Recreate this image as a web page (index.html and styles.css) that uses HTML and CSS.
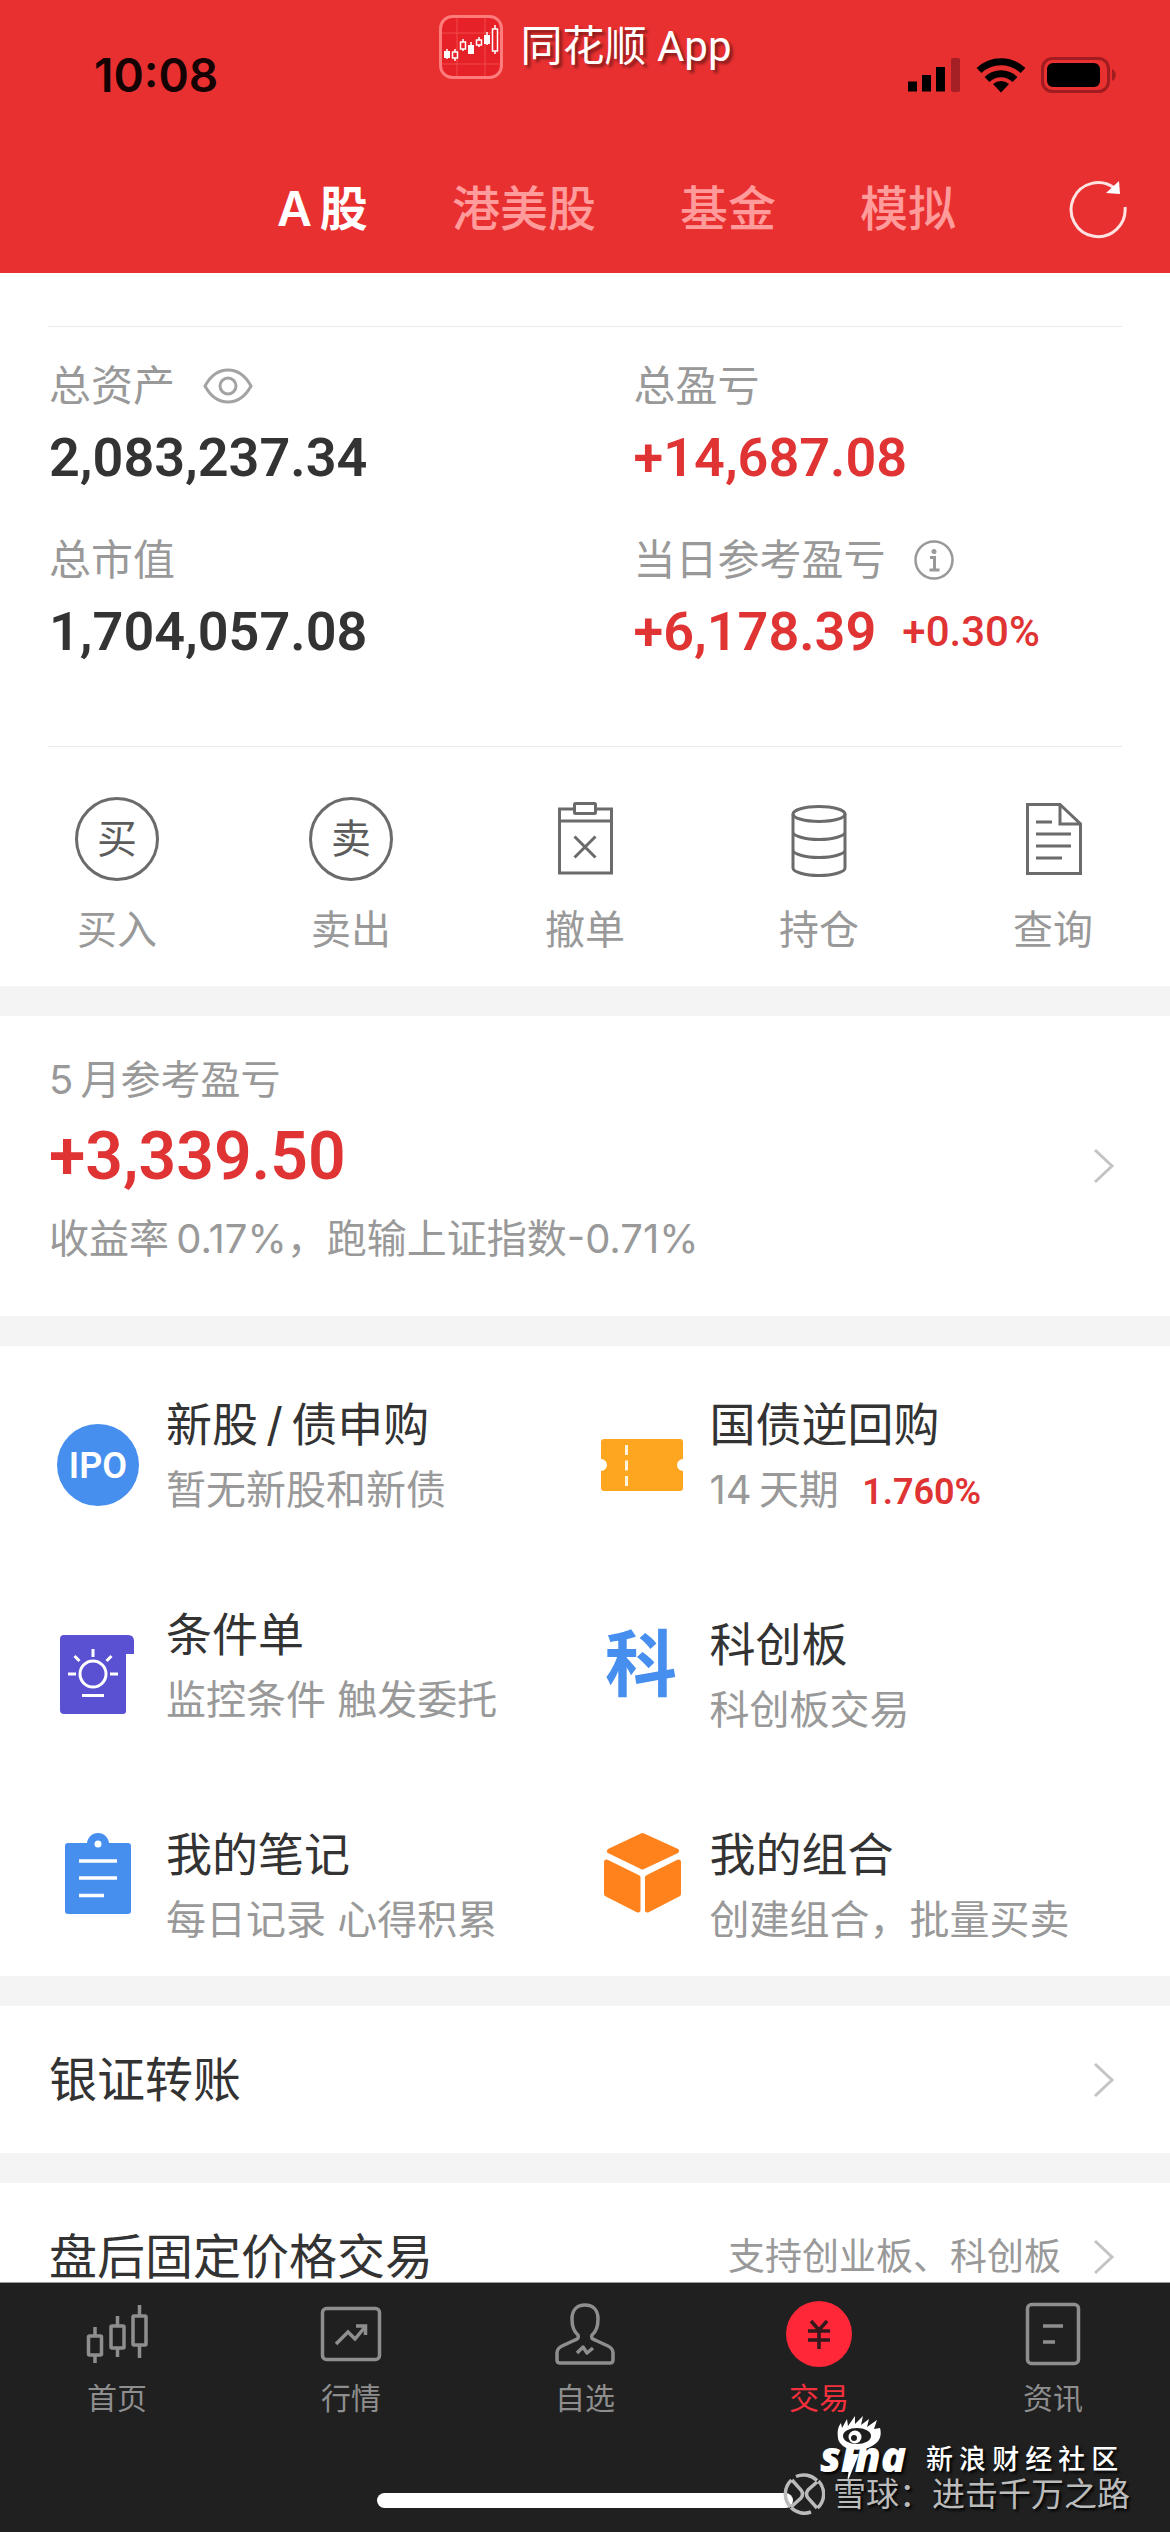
FILE: index.html
```html
<!DOCTYPE html>
<html lang="zh-CN">
<head>
<meta charset="utf-8">
<meta name="viewport" content="width=device-width, initial-scale=1">
<title>交易 - 同花顺</title>
<link rel="stylesheet" href="styles.css">
</head>
<body>
<div class="app">
  <header class="header">
    <div class="status">
      <time class="clock">10:08</time>
      <div class="brand">
        <svg class="brand-logo" viewBox="0 0 64 64" aria-hidden="true">
          <rect x="1.5" y="1.5" width="61" height="61" rx="12" fill="#e62127" stroke="#ff7c7c" stroke-width="3"/>
          <path d="M18 3v58M46 3v58M3 18h58M3 49h58" stroke="#f04a4a" stroke-width="1"/>
          <path d="M8 34v10M16 34v12M24 24v12M32 27v12M40 22v10M48 17v13M56 10v29" stroke="#fff" stroke-width="1.500"/>
          <path d="M5 36h6v7H5zM29 30h6v9h-6zM45 20h6v9h-6z" fill="#fff"/>
          <path d="M13.500 37h5v6h-5zM21.500 27h5v7h-5zM37.500 25h5v5h-5zM53.500 14h5v22h-5z" fill="#e62127" stroke="#fff" stroke-width="1.500"/>
        </svg>
        <span>同花顺 App</span>
      </div>
      <svg class="signals" viewBox="0 0 210 38" aria-hidden="true">
        <path d="M2 35.500V25.500M16 35.500V19M30 35.500V11" transform="translate(2.500 0)" stroke="#000" stroke-width="9" stroke-linecap="butt"/>
        <rect x="43" y="2" width="9" height="34" rx="2" fill="#a52024"/>
        <g fill="none" stroke="#000" stroke-width="7">
          <path d="M71 14.500a32 32 0 0 1 44 0"/>
          <path d="M79 23.500a20 20 0 0 1 28 0"/>
        </g>
        <path d="M93 36.500l-8-8.500a12 12 0 0 1 16 0z" fill="#000"/>
        <rect x="134.500" y="2.500" width="66" height="33" rx="10" fill="none" stroke="#a01c20" stroke-width="3"/>
        <rect x="139" y="7" width="53" height="24" rx="6" fill="#000"/>
        <path d="M204 13c5 2 5 10 0 12z" fill="#a01c20"/>
      </svg>
    </div>
    <nav class="tabs" aria-label="市场">
      <a class="tab tab-on" href="#a">A&thinsp;股</a>
      <a class="tab" href="#hk">港美股</a>
      <a class="tab" href="#fund">基金</a>
      <a class="tab" href="#sim">模拟</a>
      <button class="refresh" type="button" aria-label="刷新">
        <svg viewBox="0 0 60 62" aria-hidden="true">
          <path d="M57 29A27 27 0 1 1 47 10.500" fill="none" stroke="#ffe3e3" stroke-width="3"/>
          <path d="M51 3l1 13-14-1z" fill="#fff"/>
        </svg>
      </button>
    </nav>
  </header>

  <main class="content">
    <section class="assets">
      <dl class="figures">
        <div class="figure">
          <dt>总资产
            <svg class="eye" viewBox="0 0 50 40" aria-hidden="true"><g fill="none" stroke="#a3a3a3" stroke-width="3"><path d="M2 20C8 9 16 4 25 4s17 5 23 16c-6 11-14 16-23 16S8 31 2 20z"/><circle cx="25" cy="20" r="8"/></g></svg>
          </dt>
          <dd>2,083,237.34</dd>
        </div>
        <div class="figure">
          <dt>总盈亏</dt>
          <dd class="up">+14,687.08</dd>
        </div>
        <div class="figure">
          <dt>总市值</dt>
          <dd>1,704,057.08</dd>
        </div>
        <div class="figure">
          <dt>当日参考盈亏
            <svg class="info" viewBox="0 0 40 40" aria-hidden="true"><circle cx="20" cy="20" r="18.500" fill="none" stroke="#999" stroke-width="2.500"/><circle cx="20" cy="11.500" r="2.500" fill="#999"/><path d="M16 17.500h4.500V30M15.500 30h10" fill="none" stroke="#999" stroke-width="3"/></svg>
          </dt>
          <dd class="up">+6,178.39 <small>+0.30%</small></dd>
        </div>
      </dl>
    </section>

    <nav class="actions" aria-label="交易操作">
      <a href="#buy"><span class="coin">买</span>买入</a>
      <a href="#sell"><span class="coin">卖</span>卖出</a>
      <a href="#cancel">
        <svg viewBox="0 0 84 84" aria-hidden="true"><g fill="none" stroke="#6b6b6b" stroke-width="3"><path d="M31 12H16.500v64h52V12H54"/><rect x="31.500" y="6.500" width="21" height="10" rx="1"/><path d="M16 24h53M31.500 39.500l21 21M52.500 39.500l-21 21"/></g></svg>撤单</a>
      <a href="#hold">
        <svg viewBox="0 0 84 84" aria-hidden="true"><g fill="none" stroke="#6b6b6b" stroke-width="3"><ellipse cx="42" cy="17" rx="26" ry="7.500"/><path d="M16 17v54c0 4 12 7.500 26 7.500S68 75 68 71V17M16 35c0 4 12 7.500 26 7.500S68 39 68 35M16 53c0 4 12 7.500 26 7.500S68 57 68 53"/></g></svg>持仓</a>
      <a href="#query">
        <svg viewBox="0 0 84 84" aria-hidden="true"><g fill="none" stroke="#6b6b6b" stroke-width="3"><path d="M49 7.500H16.500v69h53V27zM49 7.500V27h20.500"/><path d="M25 25h16M25 37h35M25 49h35M25 61h26"/></g></svg>查询</a>
    </nav>

    <a class="month" href="#month">
      <span class="month-text">
        <span class="month-label">5&thinsp;月参考盈亏</span>
        <strong class="month-value">+3,339.50</strong>
        <span class="month-note">收益率&thinsp;0.17%，跑输上证指数-0.71%</span>
      </span>
      <svg class="chevron" viewBox="0 0 22 36" aria-hidden="true"><path d="M2 2l17 16L2 34" fill="none" stroke="#c4c4c4" stroke-width="3"/></svg>
    </a>

    <section class="features">
      <a class="feature" href="#ipo">
        <svg viewBox="0 0 96 126" aria-hidden="true"><circle cx="49" cy="71" r="41" fill="#468fee"/><text class="ipo" x="49" y="84" text-anchor="middle">IPO</text></svg>
        <span><b>新股&thinsp;/&thinsp;债申购</b><i>暂无新股和新债</i></span>
      </a>
      <a class="feature" href="#repo">
        <svg viewBox="0 0 96 126" aria-hidden="true"><path d="M11 45h76q3 0 3 3v17a6 6 0 0 0 0 12v17q0 3-3 3H11q-3 0-3-3V77a6 6 0 0 0 0-12V48q0-3 3-3z" fill="#ffa621"/><path d="M33.500 51v10M33.500 66.500v10M33.500 82v10" stroke="#fff3dc" stroke-width="3"/></svg>
        <span><b>国债逆回购</b><i>14&thinsp;天期 <em>1.760%</em></i></span>
      </a>
      <a class="feature" href="#cond">
        <svg viewBox="0 0 96 126" aria-hidden="true"><path d="M15 31h64q6 0 6 6v13h-8v57q0 3-3 3H15q-4 0-4-4V35q0-4 4-4z" fill="#5951d2"/><g fill="none" stroke="#fff" stroke-width="3"><circle cx="44" cy="70" r="13"/><path d="M19 70h8M61 70h8M44 45v8M25.500 52l5 5M62.500 52l-5 5M33 91.500h22"/></g></svg>
        <span><b>条件单</b><i>监控条件 触发委托</i></span>
      </a>
      <a class="feature feature-low" href="#star">
        <svg viewBox="0 0 96 126" aria-hidden="true"><text class="star" x="48" y="76" text-anchor="middle">科</text></svg>
        <span><b>科创板</b><i>科创板交易</i></span>
      </a>
      <a class="feature" href="#notes">
        <svg viewBox="0 0 96 126" aria-hidden="true"><circle cx="49" cy="20" r="11" fill="#468fee"/><rect x="16" y="19" width="66" height="71" rx="3" fill="#468fee"/><circle cx="49" cy="20" r="3.500" fill="#fff"/><path d="M30 37h38M30 54h38M30 71.500h25" stroke="#fff" stroke-width="3.500"/></svg>
        <span><b>我的笔记</b><i>每日记录 心得积累</i></span>
      </a>
      <a class="feature" href="#combo">
        <svg viewBox="0 0 96 126" aria-hidden="true"><g fill="#ff821c" stroke="#ff821c" stroke-width="5" stroke-linejoin="round"><path d="M49.500 11.500L83.500 27 49.500 43 16.500 27z"/><path d="M13.500 38L45 53.500V86L13.500 70z"/><path d="M85.500 38L54.500 53.500V86l31-16z"/></g></svg>
        <span><b>我的组合</b><i>创建组合，批量买卖</i></span>
      </a>
    </section>

    <a class="row" href="#transfer">
      <span class="row-title">银证转账</span>
      <svg class="chevron" viewBox="0 0 22 36" aria-hidden="true"><path d="M2 2l17 16L2 34" fill="none" stroke="#c4c4c4" stroke-width="3"/></svg>
    </a>
    <a class="row" href="#after">
      <span class="row-title">盘后固定价格交易</span>
      <span class="row-note">支持创业板、科创板</span>
      <svg class="chevron" viewBox="0 0 22 36" aria-hidden="true"><path d="M2 2l17 16L2 34" fill="none" stroke="#c4c4c4" stroke-width="3"/></svg>
    </a>
  </main>

  <footer class="dock">
    <nav class="dock-items" aria-label="主导航">
      <a href="#home"><svg viewBox="0 0 68 68" aria-hidden="true"><g fill="none" stroke="#8e8e8e" stroke-width="3.500"><rect x="5.500" y="36" width="13" height="19" rx="1"/><rect x="28" y="26" width="13" height="22" rx="1"/><rect x="50" y="16" width="13" height="29" rx="1"/><path d="M12 27v9M12 55v8M34.500 16v10M34.500 48v9M56.500 5v11M56.500 45v13"/></g></svg>首页</a>
      <a href="#quotes"><svg viewBox="0 0 68 68" aria-hidden="true"><g fill="none" stroke="#8e8e8e" stroke-width="3.500"><rect x="5.500" y="8.500" width="57" height="51" rx="4"/><path d="M19 44l12-12 7 7 10-12M39 26h9.500v9"/></g></svg>行情</a>
      <a href="#watch"><svg viewBox="0 0 68 68" aria-hidden="true"><g fill="none" stroke="#8e8e8e" stroke-width="3.500" stroke-linejoin="round"><path d="M27 35c-5-4-6-9-6-16 0-9 5-14 13-14s13 5 13 14c0 7-1 12-6 16-1 3 0 4 3 5l13 6c4 2 5 4 5 7v7q0 3-3 3H9q-3 0-3-3v-7c0-3 1-5 5-7l13-6c3-1 4-2 3-5z"/><path d="M26 53l6-6 4 6 6-5"/></g></svg>自选</a>
      <a class="dock-on" href="#trade"><svg viewBox="0 0 68 68" aria-hidden="true"><circle cx="34" cy="34" r="33" fill="#ff2738"/><path d="M26 21l8 9 8-9M34 29v20M23 31h22M23 40h22" fill="none" stroke="#33191c" stroke-width="3.500"/></svg>交易</a>
      <a href="#news"><svg viewBox="0 0 68 68" aria-hidden="true"><g fill="none" stroke="#8e8e8e" stroke-width="3.500"><rect x="8.500" y="4.500" width="51" height="59" rx="4"/><path d="M24 26h20M24 42h12"/></g></svg>资讯</a>
    </nav>
    <div class="home-bar"></div>
    <div class="marks">
      <div class="mark-sina">
        <svg viewBox="0 0 96 68" aria-hidden="true">
          <text class="sina" x="0" y="56">sina</text>
          <path d="M31 38h8L27 67z" fill="#fff"/>
          <path d="M18 22c-1-7 0-11 3-15l1 5 5-9 1 7 7-10 0 8 8-8-2 9 8-6-2 8 10-7-3 9 6-1c2 7 0 14-8 18-9 5-22 5-29 0-3-3-5-5-5-8z" fill="#fff"/>
          <ellipse cx="37" cy="20" rx="14" ry="8" fill="#1d1d1d"/>
          <circle cx="35" cy="21" r="6.500" fill="#fff"/><circle cx="34" cy="22" r="3" fill="#1d1d1d"/>
        </svg>
        <span>新 浪 财 经 社 区</span>
      </div>
      <div class="mark-xueqiu">
        <svg viewBox="0 0 42 42" aria-hidden="true"><g fill="none" stroke="#bbb" stroke-width="3.500"><path d="M13 3.500a19 19 0 0 1 21 4M8 34.500a19 19 0 0 0 20 4.500M8.500 7a19 19 0 0 0-1 27M35.500 8a19 19 0 0 1-1 27M9 7l9 10q3 4 0 8l-10 9M34 9l-9 8q-3 4 0 8l9 10"/></g></svg>
        <span>雪球：进击千万之路</span>
      </div>
    </div>
  </footer>
</div>
</body>
</html>
```

FILE: styles.css
```css
* { box-sizing: border-box; }

body {
  margin: 0;
  background: #fff;
  color: #333;
  font-family: Inter, "Noto Sans CJK SC", sans-serif;
}

a { color: inherit; text-decoration: none; }
svg { display: block; flex: none; }

.app {
  display: flex;
  flex-direction: column;
  height: 100vh;
}

/* Header */
.header {
  flex: none;
  background: #e83031;
}
.status {
  display: grid;
  grid-template-columns: 1fr auto 1fr;
  padding-top: 15px;
  height: 149px;
}
.clock {
  margin: 30px 0 0 94px;
  font-size: 46px;
  font-weight: 600;
  line-height: 60px;
  color: #150303;
}
.brand {
  display: flex;
  gap: 18px;
  align-items: center;
  height: 64px;
  font-family: Roboto, "Noto Sans CJK SC", sans-serif;
  font-size: 42px;
  line-height: 60px;
  color: #fff;
  text-shadow: 3px 3px 3px #00000070;
}
.brand-logo { width: 64px; height: 64px; }
.signals {
  width: 210px;
  height: 38px;
  margin: 41px 52px 0 0;
  justify-self: end;
}
.tabs {
  display: flex;
  gap: 84px;
  align-items: center;
  height: 124px;
  padding: 0 42px 4px 277px;
  font-size: 48px;
  line-height: 60px;
}
.tab { color: #ff9b9b; font-weight: 500; white-space: nowrap; }
.tab-on { color: #fff; font-weight: 600; }
.refresh {
  margin-left: auto;
  padding: 0;
  border: 0;
  background: none;
}
.refresh svg { width: 60px; height: 62px; }

/* Scrolling content */
.content {
  flex: 1;
  min-height: 0;
  overflow: hidden auto;
  scrollbar-width: none;
  padding-top: 53px;
}
.assets {
  margin: 0 48px;
  border: solid #eaeaea;
  border-width: 1px 0;
}
.figures {
  display: grid;
  grid-template-columns: 1fr 1fr;
  row-gap: 36px;
  column-gap: 96px;
  margin: 0;
  padding: 29px 0 78px 1px;
}
.figure { white-space: nowrap; }
.figure dt {
  display: flex;
  gap: 28px;
  align-items: center;
  font-size: 42px;
  line-height: 60px;
  color: #999;
}
.figure dd {
  display: flex;
  gap: 26px;
  align-items: center;
  margin: 6px 0 0;
  font-family: Roboto, sans-serif;
  font-size: 54px;
  font-weight: 600;
  line-height: 72px;
}
.eye { width: 50px; height: 40px; }
.info { width: 40px; height: 40px; }
.figure small { font-size: 42px; font-weight: 500; }
.figure .up, .month-value, .feature em { color: #e03333; }

.actions {
  display: grid;
  grid-template-columns: repeat(5, 1fr);
  padding: 50px 0 26px;
  font-size: 40px;
  line-height: 60px;
  color: #999;
}
.actions a {
  display: flex;
  flex-direction: column;
  gap: 19px;
  align-items: center;
}
.actions svg, .coin { width: 84px; height: 84px; }
.coin {
  border: 3px solid #6b6b6b;
  border-radius: 50%;
  line-height: 78px;
  text-align: center;
  color: #5c5c5c;
}

.month, .features, .row { border-top: 30px solid #f4f4f4; }

.month {
  display: flex;
  justify-content: space-between;
  align-items: center;
  padding: 0 55px 0 49px;
  font-size: 40px;
  line-height: 60px;
  color: #999;
}
.month-text {
  display: flex;
  flex-direction: column;
  padding: 34px 0 47px;
}
.month-value {
  margin: 7px 0 12px;
  font-family: Roboto, sans-serif;
  font-size: 66px;
  font-weight: 600;
  line-height: 80px;
}
.chevron { width: 22px; height: 36px; }

.features {
  display: grid;
  grid-template-columns: 1fr 1fr;
  grid-template-rows: 126px 136px 126px;
  row-gap: 84px;
  align-items: start;
  padding: 48px 34px 26px 49px;
}
.feature { display: flex; gap: 21px; white-space: nowrap; }
.feature-low { align-self: end; }
.feature svg { width: 96px; height: 126px; }
.feature b {
  display: block;
  margin-bottom: 6px;
  font-size: 46px;
  font-weight: 400;
  line-height: 60px;
}
.feature i {
  display: block;
  font-size: 40px;
  font-style: normal;
  line-height: 60px;
  color: #999;
}
.feature em {
  margin-left: 12px;
  font-family: Roboto, sans-serif;
  font-size: 36px;
  font-style: normal;
  font-weight: 600;
}
.ipo { fill: #fff; font-family: Roboto, sans-serif; font-size: 36px; font-weight: 600; }
.star { fill: #468fee; font-size: 72px; font-weight: 700; }

.row {
  display: flex;
  align-items: center;
  height: 177px;
  padding: 0 55px 0 49px;
}
.row-title { flex: 1; font-size: 48px; line-height: 60px; }
.row-note { margin-right: 32px; font-size: 37px; line-height: 60px; color: #999; }

/* Bottom bar */
.dock {
  position: relative;
  flex: none;
  height: 250px;
  border-top: 1px solid #9a9a9a;
  background: #202020;
}
.dock-items {
  display: grid;
  grid-template-columns: repeat(5, 1fr);
  padding-top: 17px;
  font-size: 30px;
  line-height: 40px;
  color: #8e8e8e;
}
.dock-items a {
  display: flex;
  flex-direction: column;
  gap: 10px;
  align-items: center;
}
.dock-items svg { width: 68px; height: 68px; }
.dock-items .dock-on { color: #f5303d; }
.home-bar {
  position: absolute;
  bottom: 24px;
  left: 50%;
  width: 416px;
  height: 15px;
  margin-left: -208px;
  border-radius: 8px;
  background: #fff;
}
.marks {
  position: absolute;
  right: 40px;
  bottom: 16px;
  white-space: nowrap;
  text-shadow: 2px 2px 3px #000;
}
.mark-sina, .mark-xueqiu { display: flex; align-items: center; }
.mark-sina {
  gap: 10px;
  margin-left: 37px;
  font-family: "Noto Sans CJK SC", sans-serif;
  font-size: 27px;
  font-weight: 500;
  line-height: 40px;
  color: #fff;
}
.mark-sina svg { width: 96px; height: 68px; }
.mark-sina span { margin-top: 16px; }
.mark-xueqiu {
  gap: 8px;
  margin-top: -12px;
  font-size: 33px;
  line-height: 44px;
  color: #bbb;
}
.mark-xueqiu svg { width: 42px; height: 42px; }
.sina { fill: #fff; font-family: "Open Sans", sans-serif; font-size: 42px; font-weight: 800; font-style: italic; }
```
